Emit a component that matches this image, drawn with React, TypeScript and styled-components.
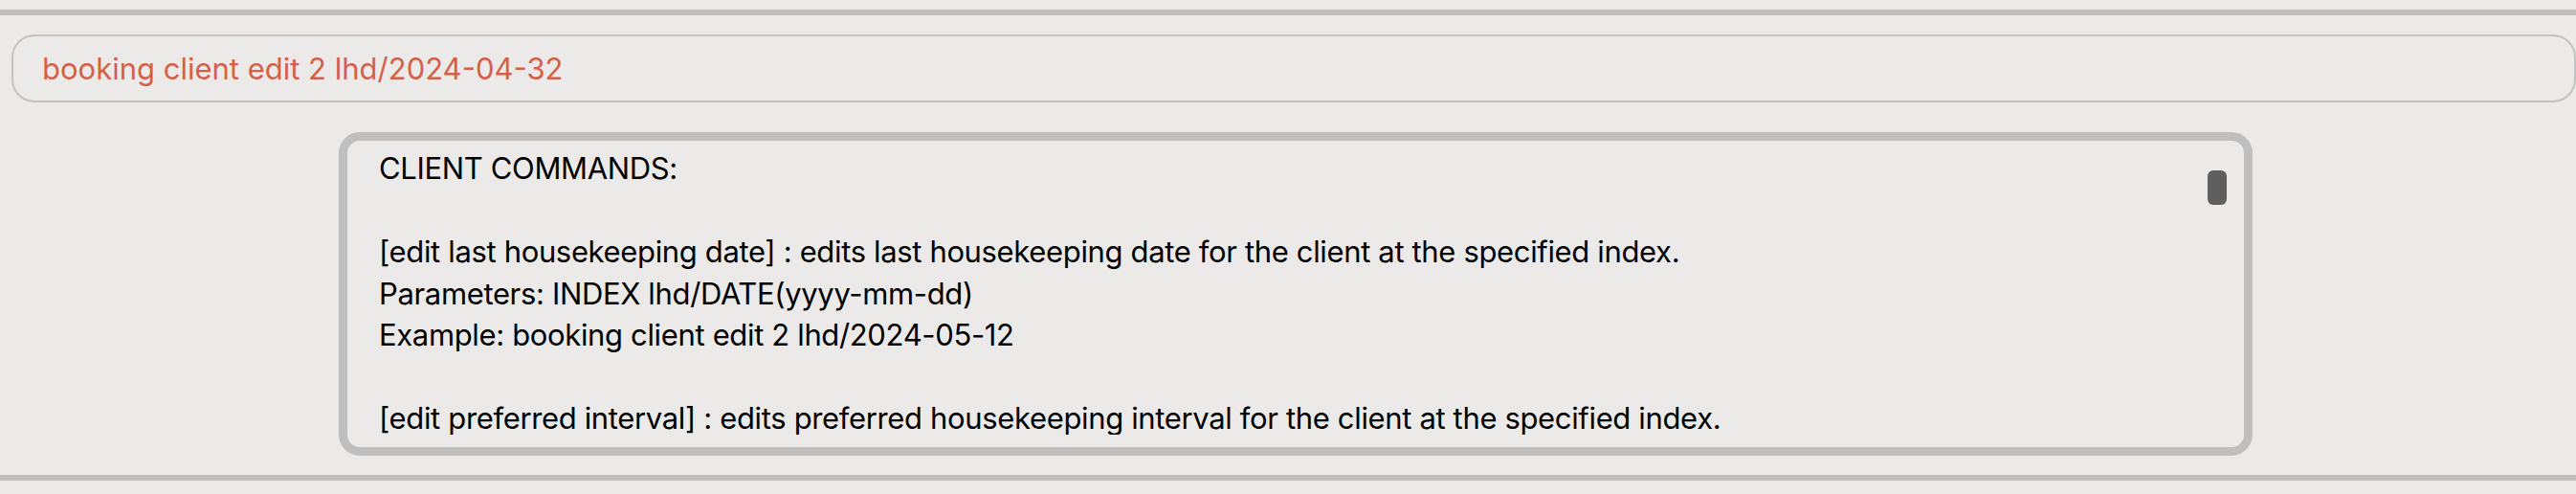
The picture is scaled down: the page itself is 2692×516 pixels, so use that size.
import React from "react";
import styled, { createGlobalStyle } from "styled-components";

const GlobalStyle = createGlobalStyle`
  html, body {
    margin: 0;
    padding: 0;
    background: #ebeae8;
  }
  body {
    font-family: Inter, Roboto, "Liberation Sans", sans-serif;
  }
`;

const Page = styled.div`
  display: flex;
  flex-direction: column;
  width: 2692px;
  height: 516px;
  overflow: hidden;
  background: #ebeae8;
`;

const Divider = styled.div<{ $top: number }>`
  height: 6px;
  margin-top: ${(p) => p.$top}px;
  background: #bfbfbf;
  flex: none;
`;

const CommandSection = styled.div`
  display: flex;
  padding: 20px 0 0 12px;
`;

const CommandBox = styled.div`
  flex: 1;
  box-sizing: border-box;
  height: 71px;
  border: 2px solid #c3c3c3;
  border-radius: 24px;
  display: flex;
  align-items: center;
  padding-left: 30px;
`;

const CommandText = styled.span`
  font-family: Inter, Roboto, "Liberation Sans", sans-serif;
  font-size: 31px;
  letter-spacing: 0;
  color: #d4604b;
  white-space: pre;
`;

const HelpSection = styled.div`
  display: flex;
  padding: 31px 0 0 354px;
`;

const HelpBox = styled.div`
  position: relative;
  box-sizing: border-box;
  width: 2000px;
  height: 338px;
  border: 9px solid #bfbfbf;
  border-radius: 22px;
  padding: 7px 40px 13px 33px;
  display: flex;
  flex-direction: column;
`;

const Viewport = styled.div`
  flex: 1;
  overflow: hidden;
`;

const HelpText = styled.div`
  font-family: Inter, Roboto, "Liberation Sans", sans-serif;
  font-size: 31px;
  letter-spacing: -0.35px;
  line-height: 43.5px;
  color: #000;
  white-space: pre;
`;

const Thumb = styled.div`
  position: absolute;
  top: 31px;
  right: 18px;
  width: 20px;
  height: 36px;
  border-radius: 6px;
  background: #5f5f5f;
`;

const helpLines = [
  "CLIENT COMMANDS:",
  "",
  "[edit last housekeeping date] : edits last housekeeping date for the client at the specified index.",
  "Parameters: INDEX lhd/DATE(yyyy-mm-dd)",
  "Example: booking client edit 2 lhd/2024-05-12",
  "",
  "[edit preferred interval] : edits preferred housekeeping interval for the client at the specified index.",
];

export default function App() {
  return (
    <>
      <GlobalStyle />
      <Page>
        <Divider $top={10} />
        <CommandSection>
          <CommandBox>
            <CommandText>booking client edit 2 lhd/2024-04-32</CommandText>
          </CommandBox>
        </CommandSection>
        <HelpSection>
          <HelpBox>
            <Viewport>
              <HelpText>{helpLines.join("\n")}</HelpText>
            </Viewport>
            <Thumb />
          </HelpBox>
        </HelpSection>
        <Divider $top={20} />
      </Page>
    </>
  );
}
